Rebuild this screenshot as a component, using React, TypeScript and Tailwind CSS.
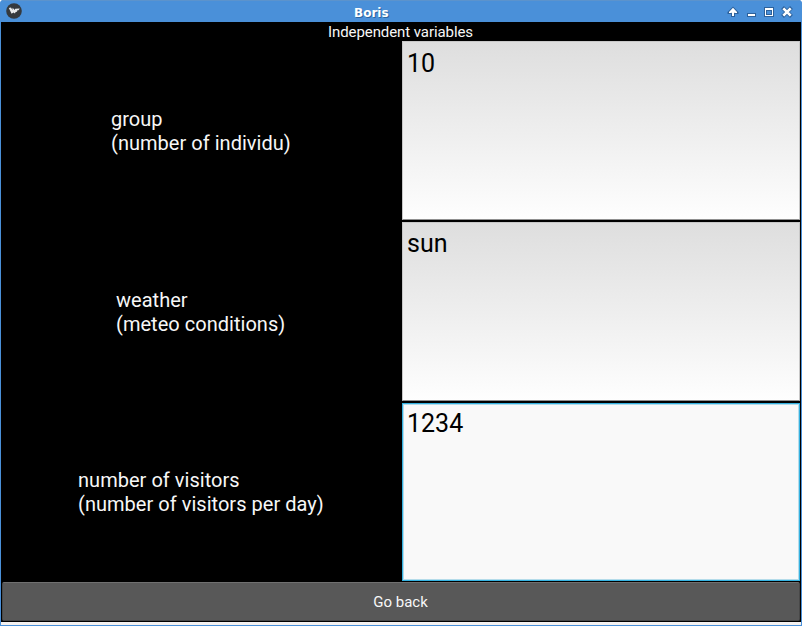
import React from "react";

type Row = { name: string; hint: string; value: string; width: string; inset: string; focused?: boolean };

const rows: Row[] = [
  { name: "group", hint: "(number of individu)", value: "10", width: "w-[179px]", inset: "pt-[6px]" },
  { name: "weather", hint: "(meteo conditions)", value: "sun", width: "w-[169px]", inset: "pt-[5px]" },
  { name: "number of visitors", hint: "(number of visitors per day)", value: "1234", width: "w-[245px]", inset: "pt-[4px]", focused: true },
];

function TitleBar() {
  return (
    <header className="flex h-[22px] shrink-0 items-start border-t border-[#5c93cc] bg-[#4a90d9]">
      <svg className="mt-[2px] ml-[6px] h-4 w-4 shrink-0" viewBox="0 0 16 16">
        <circle cx="8" cy="8" r="7.8" fill="#35393d" />
        <path d="M2.8 5 5 4.5 6.4 7 6.6 4.8 8.8 7 9.2 5.8 13.7 5.4 12.6 7.2H11.4L11 8.8 9.6 9 9 10.6 7.4 9.6 5.6 10.8Z" fill="#e9eaeb" />
      </svg>
      <h1 className="ml-[332px] w-9 whitespace-nowrap pt-[6px] font-['DejaVu_Sans',sans-serif] text-[12px] leading-none font-bold text-white [text-shadow:1px_1px_0_#2c659f]">
        Boris
      </h1>
      <svg className="mr-[6px] ml-auto h-[21px] w-[72px] shrink-0" viewBox="0 0 72 21" fill="none">
        <path d="M9 5.5 14.5 11v2H11v3H7v-3H3.5v-2Z" fill="#2d619b" />
        <path d="M9 6.8 13 11v1h-2.5l-.5-.8V15H8v-3.8l-.5.8H5v-1Z" fill="#fff" />
        <path d="M23 12h9v4h-9z" fill="#2d619b" />
        <path d="M24 13h7v2h-7z" fill="#fff" />
        <path d="M40 6h10v10H40zM43 10v3h4v-3z" fill="#2d619b" fillRule="evenodd" />
        <path d="M41 7h8v8h-8zM42 9v5h6V9z" fill="#fff" fillRule="evenodd" />
        <path d="m58.5 6.5 9 9m0-9-9 9" stroke="#2d619b" strokeWidth="4" />
        <path d="m59.3 7.3 7.4 7.4m0-7.4-7.4 7.4" stroke="#fff" strokeWidth="2.6" />
      </svg>
    </header>
  );
}

function VariableRow({ row }: { row: Row }) {
  return (
    <div className="flex">
      <div className="flex w-[401px] shrink-0 items-center justify-center pr-[2px]">
        <p className={`${row.width} whitespace-nowrap text-[20px] leading-6 tracking-[0.03px] text-[#f7f7f7]`}>
          {row.name}
          <br />
          {row.hint}
        </p>
      </div>
      <div
        className={`w-[398px] border pl-[4px] text-[25px] leading-8 text-black ${row.inset} ${
          row.focused
            ? "border-[#35b2e1] bg-[#f9f9f9] shadow-[inset_0_0_0_1px_#b5dcea]"
            : "border-[#c8c8c8] border-b-[#909090] bg-linear-to-b from-[#dedede] to-[#fefefe]"
        }`}
      >
        {row.value}
      </div>
    </div>
  );
}

export default function App() {
  return (
    <div className="h-[626px] w-[802px] overflow-hidden bg-white">
      <div className="flex h-full flex-col overflow-hidden rounded-t-[4px] bg-[#4a90d9] font-[Roboto,sans-serif]">
        <TitleBar />
        <main className="mx-px flex h-[600px] shrink-0 flex-col bg-black">
          <h2 className="h-[19px] pr-px text-center text-[15px] leading-[21px] tracking-[-0.08px] text-[#f7f7f7]">Independent variables</h2>
          <section className="grid h-[541px] grid-rows-[179px_179px_178px] gap-y-[2px]">
            {rows.map((row) => (
              <VariableRow key={row.name} row={row} />
            ))}
          </section>
          <button className="mx-px h-[39px] rounded-[2px] border border-[#484848] border-t-[#707070] bg-[#585858] pt-px pr-[1px] text-[15px] leading-[37px] text-[#f7f7f7]">
            Go back
          </button>
        </main>
        <div className="mx-px h-[3px] shrink-0 bg-[#f4f1f0]" />
      </div>
    </div>
  );
}
